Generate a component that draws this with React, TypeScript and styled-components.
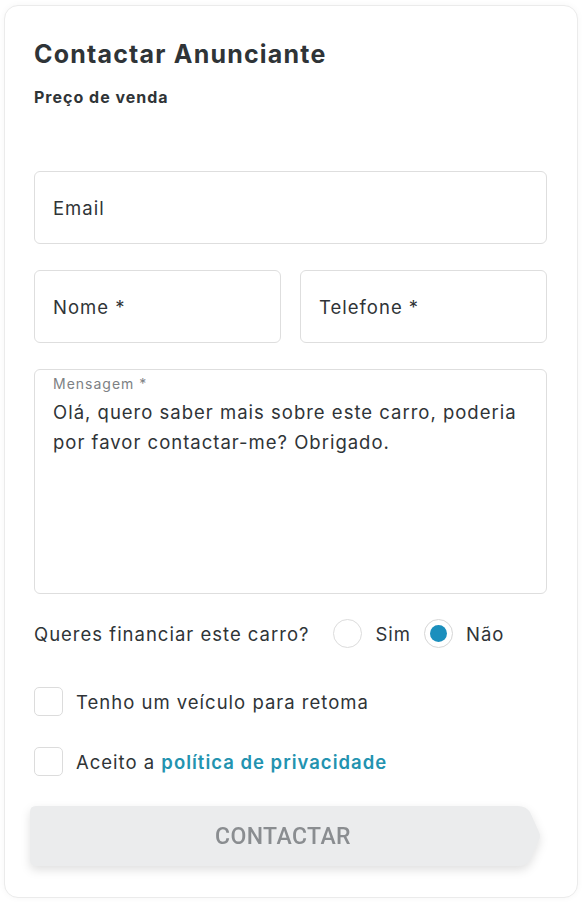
import React from "react";
import styled, { createGlobalStyle } from "styled-components";

const GlobalStyle = createGlobalStyle`
  html, body {
    margin: 0;
    padding: 0;
    background: #ffffff;
  }
  body {
    font-family: "Inter", "Noto Sans", sans-serif;
    color: #2f3437;
  }
  * {
    box-sizing: border-box;
  }
`;

const bodyText = `
  font-size: 18.5px;
  letter-spacing: 1px;
`;

const Page = styled.div`
  padding: 5px 4px 6px 4px;
`;

const Card = styled.form`
  width: 574px;
  min-height: 891px;
  padding: 32px 30px 31px 29px;
  background: #fff;
  border: 1.5px solid #ebebeb;
  border-radius: 14px;
  box-shadow: 0 0 6px rgba(0, 0, 0, 0.04);
  display: flex;
  flex-direction: column;
`;

const Title = styled.h2`
  margin: 0;
  font-size: 25px;
  line-height: 32px;
  font-weight: 700;
  letter-spacing: 1.2px;
  color: #2f3437;
`;

const Subtitle = styled.div`
  margin-top: 17px;
  font-size: 16px;
  line-height: 20px;
  font-weight: 700;
  letter-spacing: 1px;
  color: #2f3437;
`;

const Fields = styled.div`
  margin-top: 64px;
  display: flex;
  flex-direction: column;
  gap: 26px;
`;

const Row = styled.div`
  display: grid;
  grid-template-columns: 1fr 1fr;
  gap: 19px;
`;

const Input = styled.input`
  width: 100%;
  height: 73px;
  padding: 0 18px;
  border: 1.5px solid #dedede;
  border-radius: 6px;
  font-family: inherit;
  ${bodyText}
  color: #2f3437;
  background: #fff;
  outline: none;

  &::placeholder {
    color: #2f3437;
    opacity: 1;
  }
`;

const AreaBox = styled.label`
  display: flex;
  flex-direction: column;
  height: 225px;
  padding: 4px 18px 0 18px;
  border: 1.5px solid #dedede;
  border-radius: 6px;
`;

const AreaLabel = styled.span`
  font-size: 14px;
  line-height: 20px;
  letter-spacing: 1px;
  color: #7d8184;
`;

const TextArea = styled.textarea`
  flex: 1;
  border: none;
  padding: 0;
  margin-top: 3px;
  resize: none;
  outline: none;
  font-family: inherit;
  font-size: 18.5px;
  letter-spacing: 1px;
  line-height: 30px;
  color: #2f3437;
  background: transparent;
`;

const RadioRow = styled.div`
  margin-top: 25px;
  display: flex;
  align-items: center;
  height: 29px;
  ${bodyText}
`;

const Question = styled.span`
  margin-right: 24px;
`;

const RadioOption = styled.label`
  display: flex;
  align-items: center;
  gap: 13px;
  margin-right: 13px;
`;

const RadioCircle = styled.span<{ $checked?: boolean }>`
  width: 29px;
  height: 29px;
  border-radius: 50%;
  border: 1.5px solid ${({ $checked }) => ($checked ? "#d6d6d6" : "#dcdcdc")};
  background: #fff;
  display: flex;
  align-items: center;
  justify-content: center;

  &::after {
    content: "";
    width: 17px;
    height: 17px;
    border-radius: 50%;
    background: ${({ $checked }) => ($checked ? "#1b8fbd" : "transparent")};
  }
`;

const CheckRow = styled.label<{ $gap: number }>`
  margin-top: ${({ $gap }) => $gap}px;
  display: flex;
  align-items: center;
  gap: 13px;
  ${bodyText}
  height: 29px;
`;

const CheckBox = styled.span`
  width: 29px;
  height: 29px;
  border: 1.5px solid #dcdcdc;
  border-radius: 5px;
  background: #fff;
`;

const Link = styled.a`
  color: #2393b0;
  font-weight: 600;
  text-decoration: none;
`;

const ButtonShadow = styled.div`
  margin-top: 30px;
  margin-left: -4px;
  width: 510px;
  filter: drop-shadow(0 4px 5px rgba(0, 0, 0, 0.12));
`;

const Button = styled.button`
  width: 100%;
  height: 60px;
  border: none;
  background: #ebeced;
  color: #8a8d90;
  font-family: "Roboto", "Liberation Sans", sans-serif;
  font-size: 23px;
  font-weight: 500;
  letter-spacing: 0.4px;
  clip-path: path("M6 0 H488 Q496 0 500 6 L509 26 Q511 30 509 34 L500 54 Q496 60 488 60 H6 Q0 60 0 54 V6 Q0 0 6 0 Z");
  padding-left: 0;
  padding-right: 4px;
`;

export default function App() {
  return (
    <Page>
      <GlobalStyle />
      <Card onSubmit={(e) => e.preventDefault()}>
        <Title>Contactar Anunciante</Title>
        <Subtitle>Preço de venda</Subtitle>
        <Fields>
          <Input type="email" placeholder="Email" />
          <Row>
            <Input placeholder="Nome *" />
            <Input placeholder="Telefone *" />
          </Row>
          <AreaBox>
            <AreaLabel>Mensagem *</AreaLabel>
            <TextArea defaultValue="Olá, quero saber mais sobre este carro, poderia por favor contactar-me? Obrigado." />
          </AreaBox>
        </Fields>
        <RadioRow>
          <Question>Queres financiar este carro?</Question>
          <RadioOption>
            <RadioCircle />
            Sim
          </RadioOption>
          <RadioOption>
            <RadioCircle $checked />
            Não
          </RadioOption>
        </RadioRow>
        <CheckRow $gap={39}>
          <CheckBox />
          Tenho um veículo para retoma
        </CheckRow>
        <CheckRow $gap={31}>
          <CheckBox />
          <span>
            Aceito a <Link href="#">política de privacidade</Link>
          </span>
        </CheckRow>
        <ButtonShadow>
          <Button type="submit">CONTACTAR</Button>
        </ButtonShadow>
      </Card>
    </Page>
  );
}
